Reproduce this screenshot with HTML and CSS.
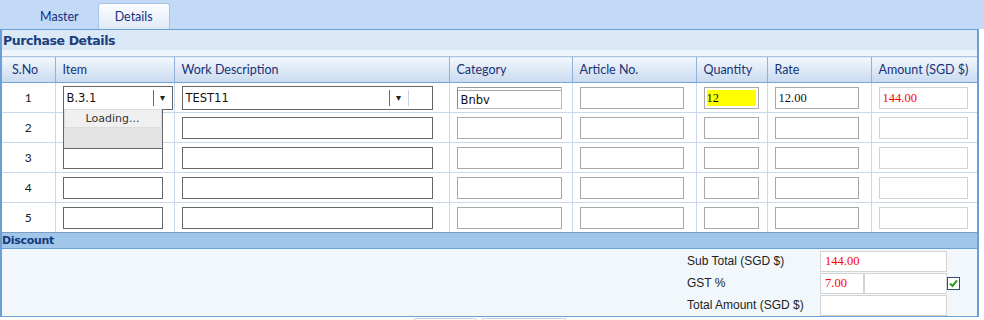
FILE: index.html
```html
<!DOCTYPE html>
<html lang="en">
<head>
  <meta charset="UTF-8">
  <title>Purchase Details</title>
  <link rel="stylesheet" href="styles.css">
</head>
<body>
  <div class="tabs">
    <span class="tab">Master</span>
    <span class="tab active">Details</span>
  </div>

  <div class="panel">
    <div class="section-title">Purchase Details</div>
    <div class="spacer"></div>

    <table class="grid">
      <colgroup>
        <col style="width:53px"><col style="width:119px"><col style="width:275px"><col style="width:123px">
        <col style="width:124px"><col style="width:71px"><col style="width:104px"><col style="width:106px">
      </colgroup>
      <thead>
        <tr>
          <th class="sno">S.No</th><th>Item</th><th>Work Description</th><th>Category</th>
          <th>Article No.</th><th>Quantity</th><th>Rate</th><th>Amount (SGD $)</th>
        </tr>
      </thead>
      <tbody>
        <tr>
          <td class="num">1</td>
          <td>
            <div class="combo-wrap">
              <div class="combo item-combo">
                <span class="combo-text">B.3.1</span>
                <span class="combo-btn">&#9662;</span>
              </div>
              <div class="dropdown">
                <div class="loading">Loading...</div>
              </div>
            </div>
          </td>
          <td>
            <div class="combo work-combo">
              <span class="combo-text">TEST11</span>
              <span class="combo-btn">&#9662;</span>
              <span class="combo-tail"></span>
            </div>
          </td>
          <td><input class="field cat inset" value="Bnbv"></td>
          <td><input class="field art"></td>
          <td><input class="field qty marked" value="12"></td>
          <td><input class="field rate num-text" value="12.00"></td>
          <td><input class="field amt num-text red" value="144.00"></td>
        </tr>
        <tr>
          <td class="num">2</td>
          <td><input class="field item"></td>
          <td><input class="field work"></td>
          <td><input class="field cat"></td>
          <td><input class="field art"></td>
          <td><input class="field qty"></td>
          <td><input class="field rate"></td>
          <td><input class="field amt"></td>
        </tr>
        <tr>
          <td class="num">3</td>
          <td><input class="field item"></td>
          <td><input class="field work"></td>
          <td><input class="field cat"></td>
          <td><input class="field art"></td>
          <td><input class="field qty"></td>
          <td><input class="field rate"></td>
          <td><input class="field amt"></td>
        </tr>
        <tr>
          <td class="num">4</td>
          <td><input class="field item"></td>
          <td><input class="field work"></td>
          <td><input class="field cat"></td>
          <td><input class="field art"></td>
          <td><input class="field qty"></td>
          <td><input class="field rate"></td>
          <td><input class="field amt"></td>
        </tr>
        <tr>
          <td class="num">5</td>
          <td><input class="field item"></td>
          <td><input class="field work"></td>
          <td><input class="field cat"></td>
          <td><input class="field art"></td>
          <td><input class="field qty"></td>
          <td><input class="field rate"></td>
          <td><input class="field amt"></td>
        </tr>
      </tbody>
    </table>

    <div class="bar">Discount</div>

    <div class="totals">
      <div class="total-row">
        <label>Sub Total (SGD $)</label>
        <input class="tbox wide num-text red" value="144.00">
      </div>
      <div class="total-row">
        <label>GST %</label>
        <input class="tbox small num-text red" value="7.00">
        <input class="tbox rest">
        <span class="check">
          <svg width="11" height="11" viewBox="0 0 11 11"><path d="M2 5.5 L4.5 8 L9 2.5" fill="none" stroke="#2a9a2a" stroke-width="2"/></svg>
        </span>
      </div>
      <div class="total-row">
        <label>Total Amount (SGD $)</label>
        <input class="tbox wide">
      </div>
    </div>
  </div>

  <div class="actions">
    <button class="btn save" aria-label="Save"></button>
    <button class="btn cancel" aria-label="Cancel"></button>
  </div>
</body>
</html>
```

FILE: styles.css
```css
body {
  margin: 0;
  height: 320px;
  overflow: hidden;
  background: white;
  font-family: Lato, sans-serif;
  font-size: 12px;
}
.tabs {
  height: 29px;
  background: #c3daf6;
  display: flex;
  align-items: flex-end;
  padding-left: 22px;
}
.tab {
  height: 25px;
  line-height: 25px;
  padding: 0 17px 0 18px;
  color: #15317e;
  font-size: 12.5px;
}
.tab.active {
  border: 1px solid #a6c4ea;
  border-bottom: none;
  border-radius: 3px 3px 0 0;
  background: linear-gradient(#fdfeff, #dde9f6);
  padding: 0 16px 0 16px;
  margin-left: 2px;
}
.panel {
  width: 975px;
  border: 1px solid #6a9fd6;
  border-left-width: 2px;
  border-right-width: 2px;
  border-bottom: none;
}
.section-title {
  height: 20px;
  line-height: 21px;
  background: #dbe8f5;
  color: #1b3e7c;
  font-family: "DejaVu Sans", sans-serif;
  font-weight: bold;
  font-size: 12.5px;
  letter-spacing: -0.4px;
  padding-left: 1px;
}
.spacer {
  height: 6px;
  background: #eef5fb;
}
.grid {
  width: 975px;
  table-layout: fixed;
  border-collapse: collapse;
}
.grid th {
  height: 25px;
  padding: 0 0 0 7px;
  text-align: left;
  font-weight: normal;
  font-size: 12.5px;
  color: #163377;
  background: linear-gradient(#f3f7fc, #c8daf0);
  border-left: 1px solid #8fb2dc;
  border-top: 1px solid #a9c4e4;
  border-bottom: 1px solid #7aa3d6;
}
.grid th.sno {
  padding-left: 10px;
  border-left: none;
}
.grid td {
  height: 29px;
  padding: 0 0 0 7px;
  border-left: 1px solid #c9d8ea;
  border-bottom: 1px solid #c9d8ea;
  vertical-align: middle;
}
.grid td.num {
  padding: 0;
  text-align: center;
  border-left: none;
  color: #222;
}
.grid tbody tr:last-child td {
  border-bottom: 1px solid #7c9cc0;
}
.field {
  box-sizing: border-box;
  display: block;
  height: 22px;
  margin: 1px 0 0 0;
  padding: 0 3px;
  border: 1px solid #a8a8a8;
  background: white;
  font-family: Tahoma, "DejaVu Sans", sans-serif;
  font-size: 11.5px;
  color: #111;
  outline: none;
}
.field.item { width: 100px; border-color: #666; }
.field.work { width: 251px; border-color: #666; }
.field.cat { width: 105px; }
.field.art { width: 104px; }
.field.qty { width: 55px; }
.field.rate { width: 84px; }
.field.amt { width: 89px; border-color: #d2d2d2; }
.field.inset {
  border-color: #999 #bbb #bbb #888;
  box-shadow: inset 0 2px 0 #fff, inset 0 3px 0 #aaa;
  padding-top: 3px;
}
.field.marked {
  padding: 2px;
  background: #ffff00 content-box;
  font-family: "Liberation Serif", serif;
  font-size: 12.5px;
}
.num-text {
  font-family: "Liberation Serif", serif;
  font-size: 12.5px;
}
.red { color: #f00; }
.combo-wrap {
  position: relative;
}
.combo {
  box-sizing: border-box;
  height: 24px;
  border: 1px solid #666;
  display: flex;
  align-items: center;
  background: white;
  font-family: Tahoma, "DejaVu Sans", sans-serif;
  font-size: 11.5px;
  color: #111;
}
.item-combo { width: 110px; }
.work-combo { width: 251px; }
.combo-text {
  flex: 1;
  padding-left: 3px;
}
.combo-btn {
  width: 18px;
  height: 16px;
  border-left: 1px solid #666;
  text-align: center;
  line-height: 16px;
  font-size: 10px;
  color: #222;
}
.combo-tail {
  width: 23px;
  height: 16px;
  border-left: 1px solid #c8d6ea;
}
.dropdown {
  position: absolute;
  left: 0;
  top: 23px;
  width: 100px;
  height: 40px;
  box-sizing: border-box;
  border: 1px solid #666;
  border-top: none;
  background: #e3e3e3;
}
.loading {
  height: 19px;
  line-height: 18px;
  box-sizing: border-box;
  border: 1px solid #dcdcdc;
  background: #f0f0f0;
  text-align: center;
  font-family: Tahoma, "DejaVu Sans", sans-serif;
  font-size: 11px;
  color: #333;
}
.bar {
  height: 15px;
  line-height: 15px;
  background: #a0c6ea;
  border-bottom: 1px solid #6aa0d8;
  color: #17387a;
  font-family: "DejaVu Sans", sans-serif;
  font-weight: bold;
  font-size: 11px;
  letter-spacing: -0.3px;
}
.totals {
  background: #f2f7fc;
  padding: 1px 0 0 685px;
  height: 66px;
  border-bottom: 1px solid #6aa0d8;
}
.total-row {
  display: flex;
  align-items: center;
  height: 22px;
}
.total-row label {
  width: 133px;
  font-family: "Liberation Sans", Arial, sans-serif;
  font-size: 12px;
  color: #222;
}
.tbox {
  box-sizing: border-box;
  height: 21px;
  border: 1px solid #d4d4d4;
  background: white;
  padding: 0 4px;
  outline: none;
}
.tbox.wide { width: 127px; }
.tbox.small { width: 44px; }
.tbox.rest { width: 83px; }
.check {
  box-sizing: border-box;
  width: 13px;
  height: 13px;
  border: 1px solid #2f4f6f;
  background: white;
  display: flex;
  align-items: center;
  justify-content: center;
}
.check svg {
  display: block;
}
.actions {
  display: flex;
  gap: 4px;
  padding: 1px 0 0 413px;
}
.btn {
  height: 24px;
  border: 1px solid #cfcfcf;
  border-radius: 3px;
  background: linear-gradient(#ffffff, #ececec);
}
.btn.save { width: 64px; }
.btn.cancel { width: 86px; }
```
